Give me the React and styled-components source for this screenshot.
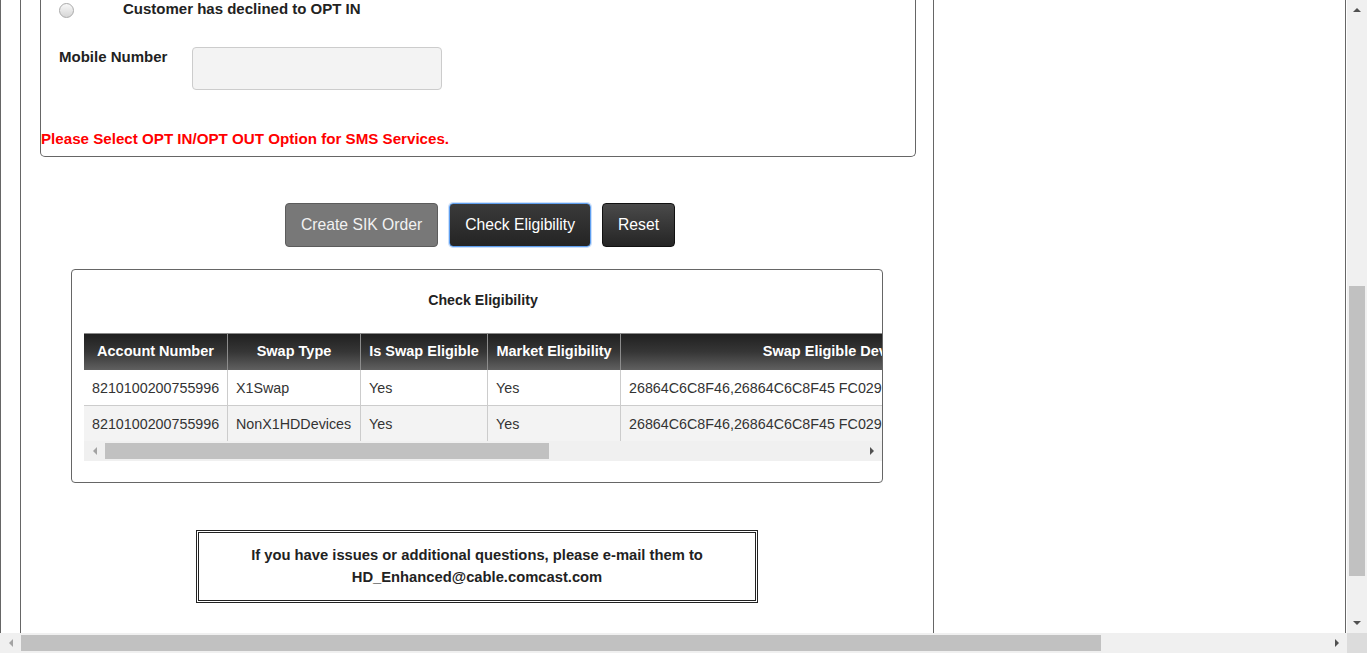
import React from 'react';
import styled, { createGlobalStyle, css } from 'styled-components';

const GlobalStyle = createGlobalStyle`
    html, body {
        margin: 0;
        padding: 0;
        background: #fff;
        font-family: "Liberation Sans", Arial, sans-serif;
        overflow: hidden;
    }
`;

// Window frame: page + fake browser scrollbars
const Screen = styled.div`
    display: grid;
    grid-template-columns: 1347px 20px;
    grid-template-rows: 633px 20px;
    width: 1367px;
    height: 653px;
    overflow: hidden;
`;

const Viewport = styled.div`
    overflow: hidden;
    background: #fff;
`;

const Page = styled.div`
    box-sizing: border-box;
    width: 1346px;
    height: 100%;
    border-left: 1px solid #666;
    border-right: 1px solid #666;
`;

const Column = styled.div`
    box-sizing: border-box;
    margin-left: 19px;
    width: 914px;
    height: 100%;
    border-left: 1px solid #666;
    border-right: 1px solid #666;
`;

// SMS opt-in box (its top is scrolled off)
const FormBox = styled.div`
    box-sizing: border-box;
    margin-left: 19px;
    width: 876px;
    padding-bottom: 8px;
    border: 1px solid #666;
    border-top: none;
    border-radius: 0 0 5px 5px;
`;

const FieldRow = styled.div`
    display: flex;
    align-items: flex-start;
    padding-left: 18px;
    margin-top: ${p => p.$top || 0}px;
`;

const Radio = styled.span`
    box-sizing: border-box;
    width: 15px;
    height: 15px;
    margin-top: 3px;
    margin-right: 49px;
    border: 1px solid #aaa;
    border-radius: 50%;
    background: linear-gradient(to bottom, #f8f8f8, #d6d6d6);
    flex: none;
`;

const Label = styled.span`
    font-size: 15px;
    font-weight: bold;
    line-height: 18px;
    color: #222;
    width: ${p => (p.$width ? `${p.$width}px` : 'auto')};
    padding-top: ${p => p.$pad || 0}px;
    flex: none;
`;

const TextInput = styled.div`
    box-sizing: border-box;
    width: 250px;
    height: 43px;
    background: #f3f3f3;
    border: 1px solid #ccc;
    border-radius: 4px;
`;

const ErrorText = styled.div`
    margin-top: 40px;
    font-size: 15.15px;
    font-weight: bold;
    line-height: 18px;
    color: #f00;
`;

// Action buttons
const ButtonRow = styled.div`
    display: flex;
    justify-content: center;
    gap: 11px;
    margin-top: 46px;
    padding-left: 6px;
`;

const buttonVariants = {
    muted: css`
        background: #787878;
        border-color: #5c5c5c;
        color: #f2f2f2;
    `,
    focused: css`
        background: linear-gradient(to bottom, #3a3a3a, #242424);
        border-color: #5f9ff0;
        box-shadow: 0 0 0 1px rgba(110, 165, 240, 0.35);
        color: #fff;
    `,
    dark: css`
        background: linear-gradient(to bottom, #4a4a4a, #252525);
        border-color: #111;
        color: #fff;
    `,
};

const Button = styled.button`
    box-sizing: border-box;
    height: 44px;
    padding: 0 15px;
    border: 1px solid;
    border-radius: 4px;
    font-family: "Liberation Sans", Arial, sans-serif;
    font-size: 15.7px;
    cursor: pointer;
    ${p => buttonVariants[p.$variant]}
`;

// Check eligibility result panel
const Panel = styled.div`
    box-sizing: border-box;
    margin: 22px 0 0 50px;
    width: 812px;
    padding: 21px 0 21px 12px;
    border: 1px solid #666;
    border-radius: 4px;
    overflow: hidden;
`;

const PanelTitle = styled.div`
    font-size: 14.2px;
    font-weight: bold;
    line-height: 18px;
    text-align: center;
    color: #222;
    margin-bottom: 24px;
`;

const Scroller = styled.div`
    overflow: hidden;
    border-top: 1px solid #8a8a8a;
`;

const GridRow = styled.div`
    display: grid;
    grid-template-columns: 144px 133px 127px 133px 437px 383px;
    width: 1357px;
    background: ${p => (p.$alt ? '#f3f3f3' : '#fff')};
    border-bottom: ${p => (p.$last ? 'none' : '1px solid #ccc')};
`;

const HeadRow = styled(GridRow)`
    background: linear-gradient(to bottom, #202020 0%, #363636 50%, #606060 100%);
    border-bottom: none;
`;

const HeadCell = styled.div`
    box-sizing: border-box;
    height: 36px;
    line-height: 34px;
    padding: 0 6px 2px;
    border-right: 1px solid #8c8c8c;
    font-size: 14.5px;
    font-weight: bold;
    color: #fff;
    text-align: center;
    white-space: nowrap;
    overflow: hidden;
`;

const Cell = styled.div`
    box-sizing: border-box;
    height: 35px;
    line-height: 34px;
    padding: 1px 8px 0;
    border-right: 1px solid #ccc;
    font-size: 14.3px;
    color: #333;
    white-space: nowrap;
    overflow: hidden;
`;

// Fake scrollbars
const Bar = styled.div`
    display: flex;
    flex-direction: ${p => (p.$vertical ? 'column' : 'row')};
    background: #f0f0f0;
    ${p => p.$inner && css`width: 100%; height: 20px;`}
`;

const ArrowBox = styled.div`
    display: flex;
    align-items: center;
    justify-content: center;
    flex: none;
    width: ${p => (p.$vertical ? '20px' : '21px')};
    height: 20px;
`;

const arrowShapes = {
    up: css`border-width: 0 4px 4px 4px; border-bottom-color: currentColor;`,
    down: css`border-width: 4px 4px 0 4px; border-top-color: currentColor;`,
    left: css`border-width: 4px 4px 4px 0; border-right-color: currentColor;`,
    right: css`border-width: 4px 0 4px 4px; border-left-color: currentColor;`,
};

const Arrow = styled.span`
    width: 0;
    height: 0;
    border-style: solid;
    border-color: transparent;
    color: ${p => (p.$disabled ? '#a3a3a3' : '#505050')};
    ${p => arrowShapes[p.$dir]}
`;

const Track = styled.div`
    flex: 1;
    display: flex;
    flex-direction: ${p => (p.$vertical ? 'column' : 'row')};
    padding: ${p => (p.$vertical ? `${p.$offset}px 2px 0 2px` : `2px 0 2px ${p.$offset}px`)};
`;

const Thumb = styled.div`
    background: #c1c1c1;
    flex: none;
    ${p => (p.$vertical ? `height: ${p.$size}px;` : `width: ${p.$size}px;`)}
`;

const Corner = styled.div`
    background: #dcdcdc;
`;

// Contact notice
const Notice = styled.div`
    box-sizing: border-box;
    width: 562px;
    margin: 47px auto 0;
    padding: 11px 0 12px;
    border: 3px double #222;
    font-size: 14.75px;
    font-weight: bold;
    line-height: 22px;
    text-align: center;
    color: #222;
`;

const columns = [
    'Account Number',
    'Swap Type',
    'Is Swap Eligible',
    'Market Eligibility',
    'Swap Eligible Devices',
    '',
];

const rows = [
    ['8210100200755996', 'X1Swap', 'Yes', 'Yes', '26864C6C8F46,26864C6C8F45 FC029F'],
    ['8210100200755996', 'NonX1HDDevices', 'Yes', 'Yes', '26864C6C8F46,26864C6C8F45 FC029F'],
];

const ScrollBar = ({ vertical, inner, offset, size, startDisabled }) => (
    <Bar $vertical={vertical} $inner={inner}>
        <ArrowBox $vertical={vertical}>
            <Arrow $dir={vertical ? 'up' : 'left'} $disabled={startDisabled} />
        </ArrowBox>
        <Track $vertical={vertical} $offset={offset}>
            <Thumb $vertical={vertical} $size={size} />
        </Track>
        <ArrowBox $vertical={vertical}>
            <Arrow $dir={vertical ? 'down' : 'right'} />
        </ArrowBox>
    </Bar>
);

const App = () => {
    return (
        <>
            <GlobalStyle />
            <Screen>
                <Viewport>
                    <Page>
                        <Column>
                            <FormBox>
                                <FieldRow>
                                    <Radio />
                                    <Label>Customer has declined to OPT IN</Label>
                                </FieldRow>
                                <FieldRow $top={29}>
                                    <Label $width={133} $pad={1}>
                                        Mobile Number
                                    </Label>
                                    <TextInput />
                                </FieldRow>
                                <ErrorText>Please Select OPT IN/OPT OUT Option for SMS Services.</ErrorText>
                            </FormBox>

                            <ButtonRow>
                                <Button $variant="muted">Create SIK Order</Button>
                                <Button $variant="focused">Check Eligibility</Button>
                                <Button $variant="dark">Reset</Button>
                            </ButtonRow>

                            <Panel>
                                <PanelTitle>Check Eligibility</PanelTitle>
                                <Scroller>
                                    <HeadRow>
                                        {columns.map((c, i) => (
                                            <HeadCell key={i}>{c}</HeadCell>
                                        ))}
                                    </HeadRow>
                                    {rows.map((r, i) => (
                                        <GridRow key={i} $alt={i % 2 === 1} $last={i === rows.length - 1}>
                                            {r.map((v, j) => (
                                                <Cell key={j}>{v}</Cell>
                                            ))}
                                            <Cell />
                                        </GridRow>
                                    ))}
                                </Scroller>
                                <ScrollBar inner offset={0} size={444} startDisabled />
                            </Panel>

                            <Notice>
                                If you have issues or additional questions, please e-mail them to
                                <br />
                                HD_Enhanced@cable.comcast.com
                            </Notice>
                        </Column>
                    </Page>
                </Viewport>
                <ScrollBar vertical offset={266} size={290} />
                <ScrollBar offset={0} size={1080} startDisabled />
                <Corner />
            </Screen>
        </>
    );
};

export default App;
